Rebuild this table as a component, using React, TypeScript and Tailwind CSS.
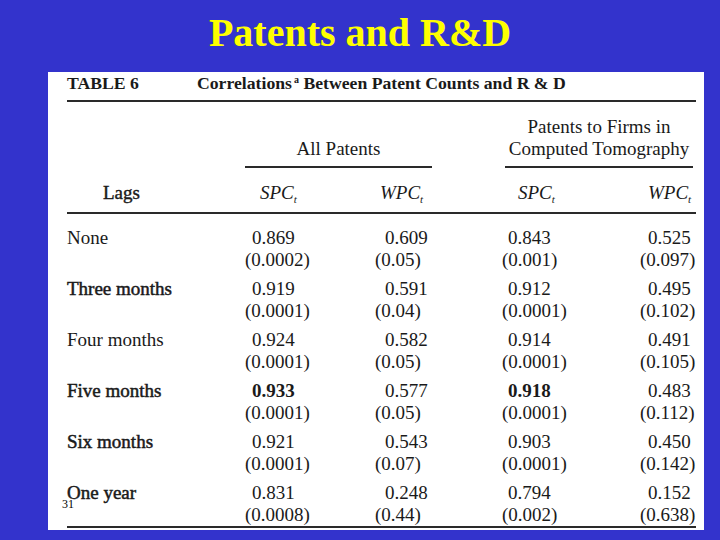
const rows = [
  { lag: "None", dark: false, v: [["0.869", "(0.0002)"], ["0.609", "(0.05)"], ["0.843", "(0.001)"], ["0.525", "(0.097)"]] },
  { lag: "Three months", dark: true, v: [["0.919", "(0.0001)"], ["0.591", "(0.04)"], ["0.912", "(0.0001)"], ["0.495", "(0.102)"]] },
  { lag: "Four months", dark: false, v: [["0.924", "(0.0001)"], ["0.582", "(0.05)"], ["0.914", "(0.0001)"], ["0.491", "(0.105)"]] },
  { lag: "Five months", dark: true, v: [["0.933", "(0.0001)"], ["0.577", "(0.05)"], ["0.918", "(0.0001)"], ["0.483", "(0.112)"]] },
  { lag: "Six months", dark: true, v: [["0.921", "(0.0001)"], ["0.543", "(0.07)"], ["0.903", "(0.0001)"], ["0.450", "(0.142)"]] },
  { lag: "One year", dark: true, v: [["0.831", "(0.0008)"], ["0.248", "(0.44)"], ["0.794", "(0.002)"], ["0.152", "(0.638)"]] },
];

// bold cells in the scan (row, column)
const boldCells = new Set(["3-0", "3-2"]);

const grid = "grid grid-cols-[178px_130px_127px_138px_56px]";
const firstIndent = ["pl-[7px]", "pl-[10px]", "pl-[6px]", "pl-[8px]"];

function Var({ name }: { name: string }) {
  return (
    <span className="italic">
      {name}
      <sub className="text-[11px] align-baseline relative top-[4px]">t</sub>
    </span>
  );
}

export default function App() {
  return (
    <div className="w-[720px] h-[540px] bg-[#3333cc] overflow-hidden font-['Liberation_Serif','Times_New_Roman',serif]">
      <h1 className="h-[72px] flex items-center justify-center pb-[6px] text-[#ffff00] font-bold text-[40px] leading-none">
        Patents and R&amp;D
      </h1>

      <div className="relative ml-[48px] w-[656px] h-[458px] bg-white pl-[19px] pr-[8px] text-[#1a1a1a] text-[19px]">
        <div className="flex h-[22px] items-center font-bold text-[17.7px]">
          <div className="w-[130px]">TABLE 6</div>
          <div>
            Correlations<sup className="text-[10px] align-baseline relative -top-[6px] ml-[2px]">a</sup> Between Patent Counts and R &amp; D
          </div>
        </div>
        <div className="mt-[6px] h-[2px] bg-[#2a2a2a]" />

        <div className="mt-[14px] flex items-end leading-[22px]">
          <div className="w-[178px]" />
          <div className="w-[187px] text-center">All Patents</div>
          <div className="w-[73px]" />
          <div className="w-[188px] text-center">
            <div>Patents to Firms in</div>
            <div>Computed Tomography</div>
          </div>
        </div>
        <div className="mt-[6px] flex">
          <div className="w-[178px]" />
          <div className="w-[187px] h-[2px] bg-[#2a2a2a]" />
          <div className="w-[73px]" />
          <div className="w-[188px] h-[2px] bg-[#2a2a2a]" />
        </div>

        <div className={`${grid} mt-[14px] leading-[22px]`}>
          <div className="pl-[36px] [-webkit-text-stroke:0.4px]">Lags</div>
          <div className="pl-[15px]"><Var name="SPC" /></div>
          <div className="pl-[5px]"><Var name="WPC" /></div>
          <div className="pl-[16px]"><Var name="SPC" /></div>
          <div className="pl-[8px]"><Var name="WPC" /></div>
        </div>
        <div className="mt-[8px] h-[2px] bg-[#2a2a2a]" />

        <div className="mt-[13px] flex flex-col gap-[7px] leading-[22px]">
          {rows.map((r, i) => (
            <div key={r.lag} className={grid}>
              <div className={r.dark ? "[-webkit-text-stroke:0.5px]" : ""}>{r.lag}</div>
              {r.v.map((c, j) => (
                <div key={j} className="whitespace-nowrap">
                  <div className={`${firstIndent[j]} ${boldCells.has(`${i}-${j}`) ? "font-bold" : ""}`}>{c[0]}</div>
                  <div>{c[1]}</div>
                </div>
              ))}
            </div>
          ))}
        </div>
        <div className="h-[2px] bg-[#2a2a2a]" />

        <div className="absolute left-[14px] top-[426px] text-[12px] leading-none text-black">31</div>
      </div>
    </div>
  );
}
